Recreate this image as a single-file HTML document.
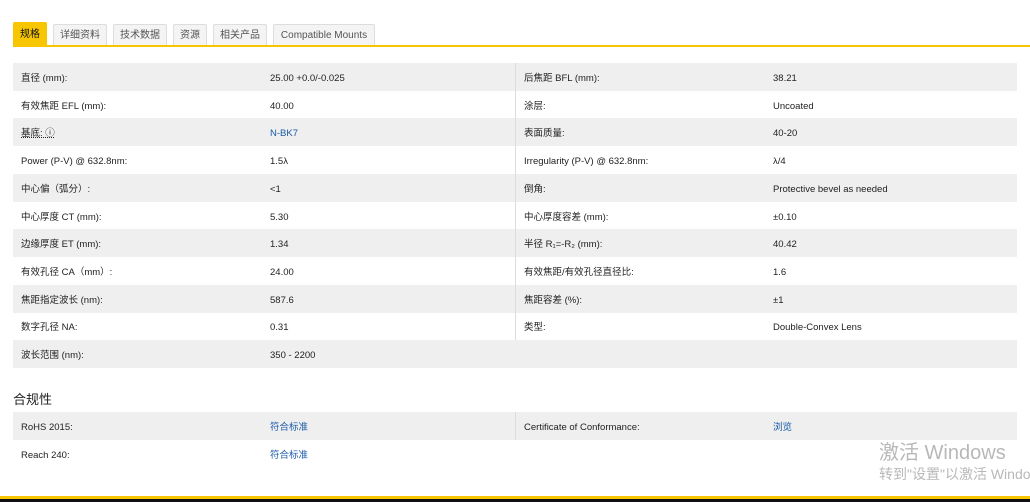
<!DOCTYPE html><html><head><meta charset="utf-8"><style>
*{margin:0;padding:0;box-sizing:border-box}
body{width:1030px;height:502px;background:#fff;position:relative;overflow:hidden;font-family:"Liberation Sans","Noto Sans CJK SC",sans-serif;font-size:9.5px;color:#222}
.tab{position:absolute;top:24px;height:22px;border:1px solid #ddd;border-bottom:none;background:#f4f4f4;color:#555;font-size:10px;line-height:22px;text-align:center;border-radius:2px 2px 0 0}
.tab.a{background:#f7c600;border-color:#f7c600;color:#111;top:22px;height:24px;line-height:24px}
.line{position:absolute;left:13px;right:0;top:45px;height:2px;background:#f7c600}
.row{position:absolute;left:13px;width:1004px;height:28px}
.g{background:#efefef}
.row span{position:absolute;top:2px;line-height:28px;white-space:nowrap}
.c1{left:8px}.c2{left:257px}.c3{left:511px}.c4{left:760px}
.dv{position:absolute;left:502px;top:0;width:1px;height:100%;background:#dcdcdc}
.lk{color:#1a5aa8}
</style></head><body>
<div class="tab a" style="left:13px;width:34px">规格</div>
<div class="tab" style="left:53px;width:54px">详细资料</div>
<div class="tab" style="left:113px;width:54px">技术数据</div>
<div class="tab" style="left:173px;width:34px">资源</div>
<div class="tab" style="left:213px;width:54px">相关产品</div>
<div class="tab" style="left:273px;width:102px">Compatible Mounts</div>
<div class="line"></div>

<div class="row g" style="top:63px"><div class="dv"></div><span class="c1">直径 (mm):</span><span class="c2">25.00 +0.0/-0.025</span><span class="c3">后焦距 BFL (mm):</span><span class="c4">38.21</span></div>
<div class="row" style="top:90.7px"><div class="dv"></div><span class="c1">有效焦距 EFL (mm):</span><span class="c2">40.00</span><span class="c3">涂层:</span><span class="c4">Uncoated</span></div>
<div class="row g" style="top:118.4px"><div class="dv"></div><span class="c1" style="text-decoration:underline dotted">基底: ⓘ</span><span class="c2 lk">N-BK7</span><span class="c3">表面质量:</span><span class="c4">40-20</span></div>
<div class="row" style="top:146.1px"><div class="dv"></div><span class="c1">Power (P-V) @ 632.8nm:</span><span class="c2">1.5λ</span><span class="c3">Irregularity (P-V) @ 632.8nm:</span><span class="c4">λ/4</span></div>
<div class="row g" style="top:173.8px"><div class="dv"></div><span class="c1">中心偏（弧分）:</span><span class="c2">&lt;1</span><span class="c3">倒角:</span><span class="c4">Protective bevel as needed</span></div>
<div class="row" style="top:201.5px"><div class="dv"></div><span class="c1">中心厚度 CT (mm):</span><span class="c2">5.30</span><span class="c3">中心厚度容差 (mm):</span><span class="c4">±0.10</span></div>
<div class="row g" style="top:229.2px"><div class="dv"></div><span class="c1">边缘厚度 ET (mm):</span><span class="c2">1.34</span><span class="c3">半径 R₁=-R₂ (mm):</span><span class="c4">40.42</span></div>
<div class="row" style="top:256.9px"><div class="dv"></div><span class="c1">有效孔径 CA（mm）:</span><span class="c2">24.00</span><span class="c3">有效焦距/有效孔径直径比:</span><span class="c4">1.6</span></div>
<div class="row g" style="top:284.6px"><div class="dv"></div><span class="c1">焦距指定波长 (nm):</span><span class="c2">587.6</span><span class="c3">焦距容差 (%):</span><span class="c4">±1</span></div>
<div class="row" style="top:312.3px"><div class="dv"></div><span class="c1">数字孔径 NA:</span><span class="c2">0.31</span><span class="c3">类型:</span><span class="c4">Double-Convex Lens</span></div>
<div class="row g" style="top:340px"><span class="c1">波长范围 (nm):</span><span class="c2">350 - 2200</span></div>

<div style="position:absolute;left:13px;top:389px;font-size:13px;color:#222">合规性</div>
<div class="row g" style="top:412px"><div class="dv"></div><span class="c1">RoHS 2015:</span><span class="c2 lk">符合标准</span><span class="c3">Certificate of Conformance:</span><span class="c4 lk">浏览</span></div>
<div class="row" style="top:440px"><span class="c1">Reach 240:</span><span class="c2 lk">符合标准</span></div>

<div style="position:absolute;left:879px;top:436px;font-size:20px;color:#b8b8b8;white-space:nowrap">激活 Windows</div>
<div style="position:absolute;left:879px;top:464px;font-size:14px;color:#b8b8b8;white-space:nowrap">转到"设置"以激活 Windows。</div>
<div style="position:absolute;left:0;top:496px;width:1030px;height:3px;background:#f7c600"></div>
<div style="position:absolute;left:0;top:499px;width:1030px;height:3px;background:#111"></div>
</body></html>
